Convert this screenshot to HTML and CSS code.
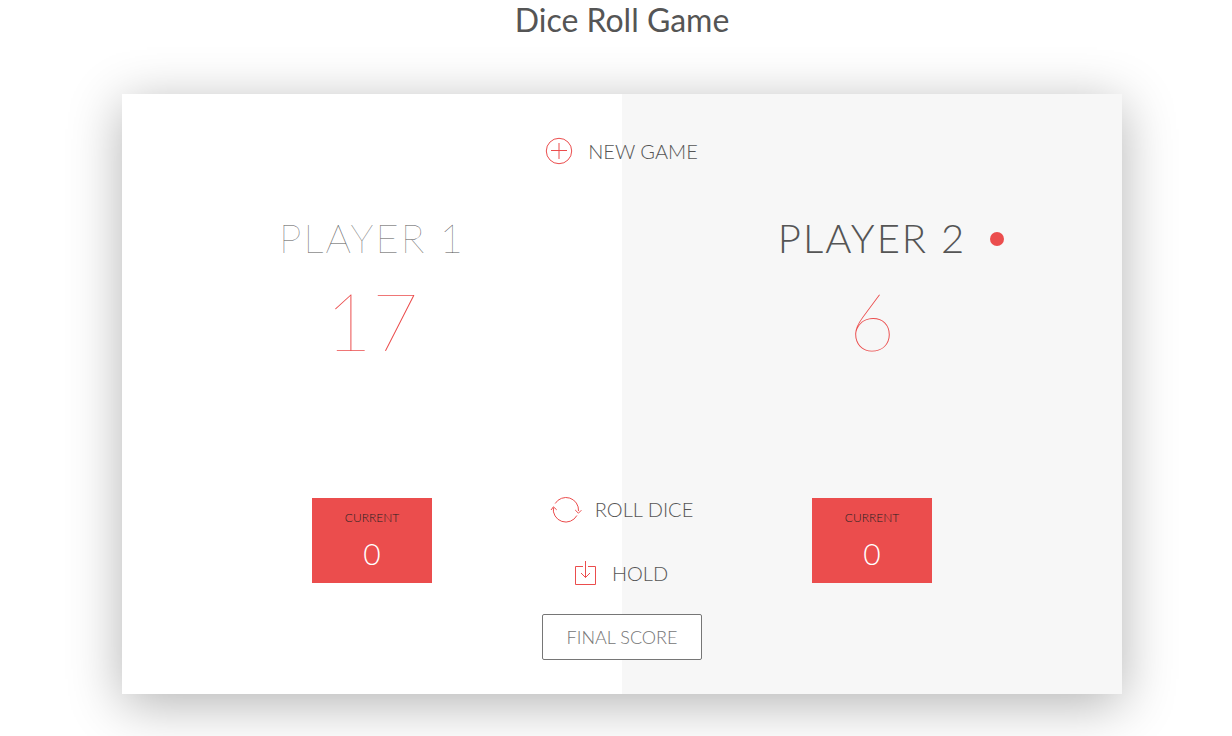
FILE: index.html
```html
<!DOCTYPE html>
<html lang="en">
<head>
<meta charset="utf-8">
<title>Dice Roll Game</title>
<link rel="stylesheet" href="styles.css">
</head>
<body>
<h1 class="title">Dice Roll Game</h1>
<main class="board">
  <section class="player player-one">
    <h2 class="player-name">Player 1</h2>
    <div class="player-score">17</div>
    <div class="current">
      <div class="current-label">Current</div>
      <div class="current-score">0</div>
    </div>
  </section>
  <section class="player player-two active">
    <h2 class="player-name">Player 2</h2>
    <div class="player-score">6</div>
    <div class="current">
      <div class="current-label">Current</div>
      <div class="current-score">0</div>
    </div>
  </section>
  <div class="controls">
    <button class="btn btn-new" type="button">
      <svg class="icon" viewBox="0 0 30 30" width="30" height="30" aria-hidden="true"><circle cx="15" cy="15" r="12.7"/><path d="M15 7v16M7 14.5h16"/></svg>
      New game
    </button>
    <button class="btn btn-roll" type="button">
      <svg class="icon" viewBox="0 0 30 30" width="30" height="30" aria-hidden="true"><path d="M4.200 9.500A12.600 12.600 0 0 1 27.500 17M25.900 21.500A12.600 12.600 0 0 1 2.400 13.500M24.200 16l3.200 3.200 3-3M0 16l2.400-3.200 3.300 3"/></svg>
      Roll dice
    </button>
    <button class="btn btn-hold" type="button">
      <svg class="icon" viewBox="2 0 26 30" width="26" height="30" aria-hidden="true"><path d="M13 8.500H5.500v18h20v-18H18M15.500 3v16.500M11 15l4.500 4.500 4.500-4.500"/></svg>
      Hold
    </button>
    <input class="final-score" type="text" placeholder="Final score" aria-label="Final score">
  </div>
</main>
</body>
</html>
```
FILE: styles.css
```css
* {
  box-sizing: border-box;
}

body {
  min-height: 100vh;
  margin: 0;
  padding-left: 12px;
  background: #fff;
  color: #555;
  font-family: Lato, "Open Sans", sans-serif;
  font-weight: 300;
}

.title {
  margin: 0 0 54px;
  font-size: 32px;
  line-height: 40px;
  font-weight: 400;
  text-align: center;
}

.board {
  display: grid;
  grid-template-columns: 1fr 1fr;
  max-width: 1000px;
  min-height: 600px;
  margin: 0 auto;
  background: #fff;
  box-shadow: 0 10px 50px rgba(0, 0, 0, 0.3);
}

.player {
  grid-row: 1;
  display: flex;
  flex-direction: column;
  align-items: center;
  padding: 120px 0 111px;
}

.player-one {
  grid-column: 1;
}

.player-two {
  grid-column: 2;
}

.active {
  background: #f7f7f7;
}

.player-name {
  position: relative;
  margin: 0;
  font-size: 40px;
  line-height: 48px;
  font-weight: 100;
  letter-spacing: 2px;
  text-transform: uppercase;
}

.active .player-name {
  font-weight: 300;
}

.active .player-name::after {
  content: "";
  position: absolute;
  top: 18px;
  left: calc(100% + 24px);
  width: 14px;
  height: 14px;
  border-radius: 50%;
  background: #eb4d4d;
}

.player-score {
  margin-top: 10px;
  color: #eb4d4d;
  font-size: 80px;
  line-height: 96px;
  font-weight: 100;
}

.current {
  width: 120px;
  margin-top: auto;
  padding: 12px 0;
  background: #eb4d4d;
  color: #fff;
  text-align: center;
}

.current-label {
  margin-bottom: 10px;
  color: #222;
  font-size: 12px;
  line-height: 15px;
  text-transform: uppercase;
}

.current-score {
  font-size: 30px;
  line-height: 36px;
}

.controls {
  grid-area: 1 / 1 / 2 / 3;
  justify-self: center;
  display: flex;
  flex-direction: column;
  align-items: center;
  padding: 40px 0 34px;
}

.btn {
  display: flex;
  align-items: center;
  gap: 14px;
  padding: 0 2px 0 0;
  border: 0;
  background: none;
  color: #555;
  font: inherit;
  font-size: 20px;
  line-height: 34px;
  text-transform: uppercase;
  cursor: pointer;
}

.btn-roll {
  margin-top: auto;
  padding: 0;
}

.btn-hold {
  margin: 30px 0 24px;
  padding-right: 4px;
}

.icon {
  fill: none;
  stroke: #eb4d4d;
  overflow: visible;
}

.final-score {
  width: 160px;
  height: 46px;
  padding: 0;
  border: 1px solid #767676;
  border-radius: 2px;
  background: #fff;
  color: #555;
  font: inherit;
  font-size: 18px;
  text-align: center;
}

.final-score::placeholder {
  color: #757575;
  text-transform: uppercase;
}
```
